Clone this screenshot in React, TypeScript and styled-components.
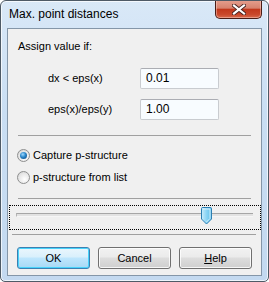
import React, { FC } from "react";
import styled, { createGlobalStyle } from "styled-components";

const GlobalStyle = createGlobalStyle`
  html, body {
    margin: 0;
    padding: 0;
    background: #ffffff;
  }
  body {
    font-family: "Liberation Sans", Arial, sans-serif;
    font-size: 11px;
    color: #000;
  }
`;

const uiFont = `"Liberation Sans", Arial, sans-serif`;

const Window = styled.div`
  box-sizing: border-box;
  width: 269px;
  height: 282px;
  border: 1px solid #4e5a66;
  border-radius: 6px 6px 5px 5px;
  background: linear-gradient(180deg, #d9e8f7 0%, #c9def3 40%, #c3d9f0 100%);
  box-shadow: inset 0 0 0 1px rgba(255, 255, 255, 0.7);
  display: flex;
  flex-direction: column;
  overflow: hidden;
`;

const TitleBar = styled.div`
  height: 27px;
  display: flex;
  align-items: flex-start;
  padding-left: 8px;
  padding-right: 6px;
`;

const Title = styled.div`
  font-family: ${uiFont};
  font-size: 12px;
  line-height: 14px;
  margin-top: 6px;
  color: #000;
  flex: 1;
`;

const CloseButton = styled.div`
  box-sizing: border-box;
  width: 47px;
  height: 19px;
  margin-top: -1px;
  border: 1px solid #4a1d16;
  border-top: none;
  border-radius: 0 0 5px 5px;
  background: linear-gradient(180deg, #e6a08f 0%, #d7826e 45%, #c2381c 52%, #c9482b 80%, #d86a4c 100%);
  box-shadow: inset 0 0 0 1px rgba(255, 220, 210, 0.45);
  display: flex;
  align-items: center;
  justify-content: center;
`;

const Client = styled.div`
  box-sizing: border-box;
  margin: 0 6px 0 6px;
  width: 255px;
  height: 248px;
  border: 1px solid #8496a8;
  background: #f0f0f0;
  display: flex;
  flex-direction: column;
`;

const Caption = styled.div`
  margin: 11px 0 0 10px;
  line-height: 13px;
`;

const FieldGrid = styled.div`
  margin: 15px 0 0 40px;
  display: grid;
  grid-template-columns: 92px 79px;
  row-gap: 10px;
  align-items: center;
`;

const FieldLabel = styled.span`
  line-height: 13px;
`;

const Input = styled.div`
  box-sizing: border-box;
  height: 21px;
  border: 1px solid #c9ccd0;
  border-top-color: #abadb3;
  border-radius: 2px;
  background: #f8fcff;
  padding: 0 5px;
  line-height: 19px;
  font-size: 12px;
  color: #000;
`;

const Separator = styled.div<{ $top: number; $left: number; $right: number }>`
  height: 1px;
  background: #a0a0a0;
  margin: ${(p) => `${p.$top}px ${p.$right}px 0 ${p.$left}px`};
`;

const RadioGroup = styled.div`
  margin: 8px 0 0 9px;
  display: flex;
  flex-direction: column;
`;

const RadioRow = styled.label`
  height: 22px;
  display: flex;
  align-items: center;
  gap: 3px;
`;

const RadioCircle = styled.span<{ $checked?: boolean }>`
  box-sizing: border-box;
  width: 13px;
  height: 13px;
  border-radius: 50%;
  border: 1px solid #8e8f8f;
  background: radial-gradient(circle at 60% 65%, #ffffff 0%, #e6e6e6 60%, #c9c9c9 100%);
  display: flex;
  align-items: center;
  justify-content: center;

  &::after {
    content: "";
    display: ${(p) => (p.$checked ? "block" : "none")};
    width: 7px;
    height: 7px;
    border-radius: 50%;
    background: radial-gradient(circle at 40% 35%, #9fd8ff 0%, #2a86c9 45%, #0b3f78 100%);
  }
`;

const FocusRect = styled.div`
  box-sizing: border-box;
  margin: 6px 0 0 1px;
  width: 252px;
  height: 25px;
  border: 1px dotted #000;
  position: relative;
`;

const Track = styled.div`
  position: absolute;
  left: 6px;
  right: 7px;
  top: 7px;
  height: 2px;
  border-top: 1px solid #a6a6a6;
  border-bottom: 1px solid #f6f6f6;
  background: #e2e2e2;
  border-left: 1px solid #b5b5b5;
`;

const Thumb = styled.svg`
  position: absolute;
  left: 191px;
  top: 1px;
`;

const ButtonRow = styled.div`
  margin: 12px 0 0 9px;
  display: flex;
  gap: 8px;
`;

const Button = styled.div<{ $default?: boolean }>`
  box-sizing: border-box;
  width: 73px;
  height: 22px;
  border-radius: 3px;
  border: 1px solid ${(p) => (p.$default ? "#3c7fb1" : "#707070")};
  background: ${(p) =>
    p.$default
      ? "linear-gradient(180deg, #eaf6fd 0%, #d9f0fc 45%, #bee6fd 50%, #a7d9f5 100%)"
      : "linear-gradient(180deg, #f2f2f2 0%, #ebebeb 45%, #dddddd 50%, #cfcfcf 100%)"};
  box-shadow: inset 0 0 0 1px ${(p) => (p.$default ? "#48d3fb" : "rgba(255,255,255,0.8)")};
  display: flex;
  align-items: center;
  justify-content: center;
  line-height: 13px;
  color: #000;
`;

const Mnemonic = styled.span`
  text-decoration: underline;
`;

const App: FC = () => {
  return (
    <>
      <GlobalStyle />
      <Window>
        <TitleBar>
          <Title>Max. point distances</Title>
          <CloseButton>
            <svg width="14" height="11" viewBox="0 0 14 11">
              <path
                d="M2 1.5 L12 9.5 M12 1.5 L2 9.5"
                stroke="#4a2420"
                strokeWidth="4"
                strokeLinecap="square"
              />
              <path
                d="M2 1.5 L12 9.5 M12 1.5 L2 9.5"
                stroke="#ffffff"
                strokeWidth="2.2"
                strokeLinecap="square"
              />
            </svg>
          </CloseButton>
        </TitleBar>
        <Client>
          <Caption>Assign value if:</Caption>
          <FieldGrid>
            <FieldLabel>dx &lt; eps(x)</FieldLabel>
            <Input>0.01</Input>
            <FieldLabel>eps(x)/eps(y)</FieldLabel>
            <Input>1.00</Input>
          </FieldGrid>
          <Separator $top={15} $left={10} $right={10} />
          <RadioGroup>
            <RadioRow>
              <RadioCircle $checked />
              Capture p-structure
            </RadioRow>
            <RadioRow>
              <RadioCircle />
              p-structure from list
            </RadioRow>
          </RadioGroup>
          <Separator $top={10} $left={10} $right={10} />
          <FocusRect>
            <Track />
            <Thumb width="11" height="18" viewBox="0 0 11 18">
              <defs>
                <linearGradient id="thumbFill" x1="0" y1="0" x2="1" y2="0">
                  <stop offset="0" stopColor="#c9ecfb" />
                  <stop offset="0.5" stopColor="#8ad4f4" />
                  <stop offset="1" stopColor="#5fbfe9" />
                </linearGradient>
              </defs>
              <path
                d="M1.5 0.5 H9.5 Q10.5 0.5 10.5 1.5 V12 L5.5 17 L0.5 12 V1.5 Q0.5 0.5 1.5 0.5 Z"
                fill="url(#thumbFill)"
                stroke="#2c7fb3"
              />
              <path d="M2 2 H9 V11.5 L5.5 15" fill="none" stroke="#e8f8ff" strokeWidth="0.8" />
            </Thumb>
          </FocusRect>
          <Separator $top={4} $left={4} $right={5} />
          <ButtonRow>
            <Button $default>OK</Button>
            <Button>Cancel</Button>
            <Button>
              <span>
                <Mnemonic>H</Mnemonic>elp
              </span>
            </Button>
          </ButtonRow>
        </Client>
      </Window>
    </>
  );
};

export default App;
